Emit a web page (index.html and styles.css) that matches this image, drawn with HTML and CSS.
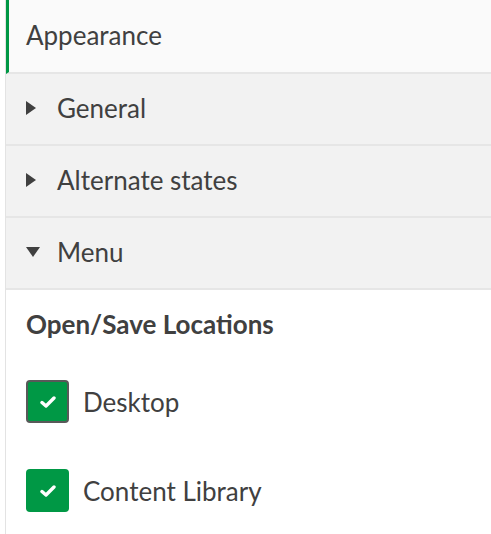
FILE: index.html
```html
<!DOCTYPE html>
<html>
<head>
<meta charset="utf-8">
<link rel="stylesheet" href="styles.css">
</head>
<body>
<div class="panel">
  <div class="section-head">Appearance</div>
  <div class="row"><span class="tri tri-right"></span><span class="label">General</span></div>
  <div class="row"><span class="tri tri-right"></span><span class="label">Alternate states</span></div>
  <div class="row"><span class="tri tri-down"></span><span class="label">Menu</span></div>
  <div class="content">
    <div class="group-title">Open/Save Locations</div>
    <label class="check focused">
      <span class="box"><svg viewBox="0 0 16 12" width="16" height="12"><path d="M2 6.5 L6 10 L14 2" fill="none" stroke="#fff" stroke-width="3.4" stroke-linecap="round" stroke-linejoin="round"/></svg></span>
      <span class="check-label">Desktop</span>
    </label>
    <label class="check">
      <span class="box"><svg viewBox="0 0 16 12" width="16" height="12"><path d="M2 6.5 L6 10 L14 2" fill="none" stroke="#fff" stroke-width="3.4" stroke-linecap="round" stroke-linejoin="round"/></svg></span>
      <span class="check-label">Content Library</span>
    </label>
  </div>
</div>
</body>
</html>
```

FILE: styles.css
```css
html, body {
  margin: 0;
  padding: 0;
  background: #ffffff;
}
body {
  font-family: Lato, "Open Sans", sans-serif;
  color: #404040;
  width: 491px;
  height: 534px;
  overflow: hidden;
}
.panel {
  margin-left: 5px;
  border-left: 1px solid #e3e3e3;
  min-height: 534px;
  box-sizing: border-box;
}
.section-head {
  height: 74px;
  display: flex;
  align-items: center;
  padding-left: 17px;
  padding-bottom: 3px;
  box-sizing: border-box;
  border-left: 3px solid #009845;
  background: #fafafa;
  border-bottom: 2px solid #e6e6e6;
  font-size: 26px;
}
.row {
  height: 72px;
  box-sizing: border-box;
  padding-bottom: 2px;
  display: flex;
  align-items: center;
  background: #f2f2f2;
  border-bottom: 2px solid #e6e6e6;
  padding-left: 20px;
  font-size: 26px;
}
.tri {
  width: 0;
  height: 0;
  margin-right: 21px;
}
.tri-right {
  border-top: 7px solid transparent;
  border-bottom: 7px solid transparent;
  border-left: 10px solid #404040;
}
.tri-down {
  border-left: 7px solid transparent;
  border-right: 7px solid transparent;
  border-top: 10px solid #404040;
  margin-right: 17px;
}
.content {
  padding: 18px 20px 0 20px;
}
.group-title {
  font-weight: bold;
  font-size: 26px;
  line-height: 32px;
  margin-bottom: 40px;
}
.check {
  display: flex;
  align-items: center;
  gap: 14px;
  margin-bottom: 46px;
  font-size: 26px;
}
.box {
  width: 43px;
  height: 43px;
  box-sizing: border-box;
  border-radius: 4px;
  background: #009845;
  display: flex;
  align-items: center;
  justify-content: center;
}
.focused .box {
  border: 2px solid #595959;
}
```
